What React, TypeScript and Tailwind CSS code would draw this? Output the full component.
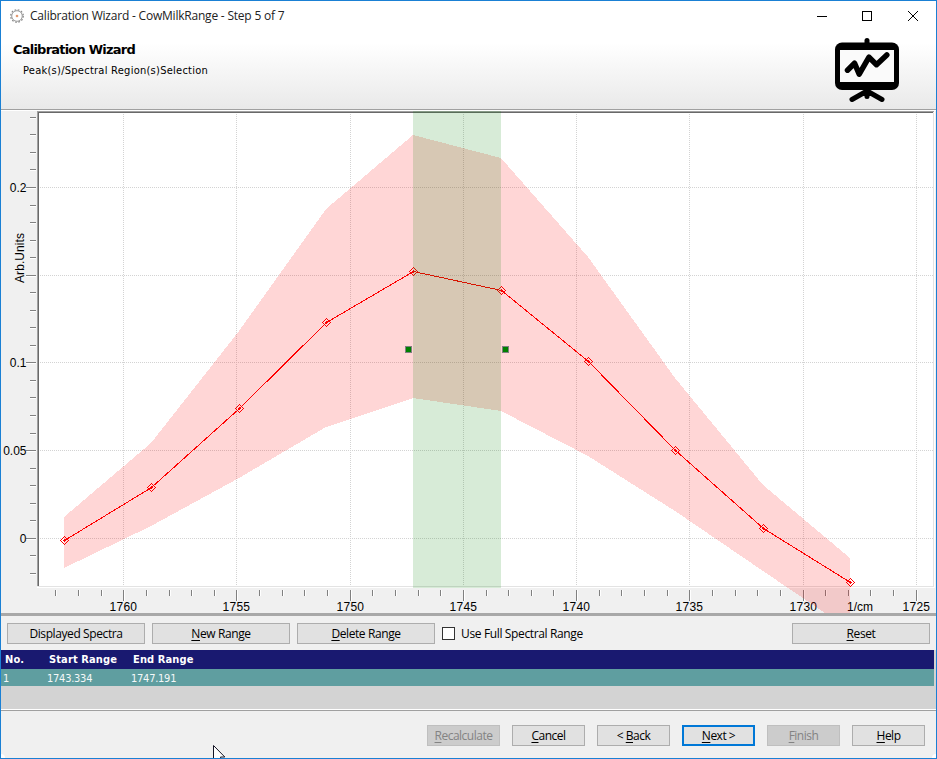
import React from "react";

const UI = "font-['Open_Sans','Noto_Sans',sans-serif]";

const line: number[][] = [[64, 540], [151, 487], [239, 408], [326, 322], [413, 271], [501, 290], [588, 361], [675, 450], [763, 528], [850, 582]];
const upper = [517, 443, 331, 209, 135, 158, 257, 378, 485, 558];
const lower = [568, 526, 478, 427, 398, 411, 456, 511, 571, 630];
const band = [
  ...line.map(([x], i) => `${x},${upper[i]}`),
  ...line.map(([x], i) => `${x},${lower[i]}`).reverse(),
].join(" ");

const xMajor = [123, 236, 350, 463, 576, 689, 803, 916].map((x, i) => ({ x, value: 1760 - i * 5 }));
const xMinor = [
  55, 78, 101, 146, 169, 191, 214, 259, 282, 304, 327, 372, 395, 418, 440, 486,
  508, 531, 553, 599, 621, 644, 667, 712, 735, 757, 780, 825, 848, 870, 893,
];
const yMajor = [
  { y: 187, label: "0.2" },
  { y: 275, label: "" },
  { y: 362, label: "0.1" },
  { y: 450, label: "0.05" },
  { y: 538, label: "0" },
];
const yMinor = Array.from({ length: 27 }, (_, i) => i)
  .filter((i) => (i + 1) % 5 !== 0)
  .map((i) => Math.floor(117.3 + i * 17.54));

function Chart() {
  return (
    <svg
      className="block font-['Liberation_Sans',Arial,sans-serif] text-[12px]"
      width="934"
      height="502"
      viewBox="1 111 934 502"
      shapeRendering="crispEdges"
    >
      <rect x="1" y="111" width="934" height="502" fill="#f0f0f0" />
      <rect x="39" y="113" width="894" height="473" fill="#fff" />
      <path d="M37 111H934V112H38V586H37Z" fill="#a0a0a0" />
      <path d="M38 112H933V113H39V586H38Z" fill="#696969" />
      <path d="M38 586H933V113H934V587H38Z" fill="#e3e3e3" />
      <path d="M37 587H934V111H935V588H37Z" fill="#fff" />
      {xMinor.map((x) => (
        <g key={x}>
          <rect x={x} y="590" width="1" height="6" fill="#808080" />
          <rect x={x + 1} y="590" width="1" height="6" fill="#fff" />
        </g>
      ))}
      {xMajor.map(({ x, value }) => (
        <g key={value}>
          <line x1={x + 0.5} x2={x + 0.5} y1="114" y2="586" stroke="#d3d3d3" strokeDasharray="1 1" />
          <rect x={x} y="590" width="1" height="11" fill="#808080" />
          <rect x={x + 1} y="590" width="1" height="11" fill="#fff" />
        </g>
      ))}
      {yMinor.map((y) => (
        <g key={y}>
          <rect x="30" y={y} width="6" height="1" fill="#808080" />
          <rect x="30" y={y + 1} width="6" height="1" fill="#fff" />
        </g>
      ))}
      {yMajor.map(({ y }) => (
        <g key={y}>
          <line x1="40" x2="933" y1={y + 0.5} y2={y + 0.5} stroke="#d3d3d3" strokeDasharray="1 1" />
          <rect x="26" y={y} width="10" height="1" fill="#808080" />
          <rect x="26" y={y + 1} width="10" height="1" fill="#fff" />
        </g>
      ))}
      <g fill="#000">
        {yMajor.map(({ y, label }) => (
          <text key={y} x="26.500" y={y + 5} textAnchor="end">{label}</text>
        ))}
        {xMajor.map(({ x, value }) => (
          <text key={value} x={x + 0.3} y="611" textAnchor="middle" textLength="27.500">{value}</text>
        ))}
        <text x="847" y="611" textLength="26">1/cm</text>
        <text x="24" y="283" transform="rotate(-90 24 283)" textLength="50">Arb.Units</text>
      </g>
      <polyline points={line.map(([x, y]) => `${x + 0.5},${y + 0.5}`).join(" ")} fill="none" stroke="#f00" />
      {line.map(([x, y]) => (
        <path
          key={x}
          d={`M${x - 3.5} ${y + 0.5}L${x + 0.5} ${y - 3.5}L${x + 4.5} ${y + 0.5}L${x + 0.5} ${y + 4.5}Z M${x - 1} ${y + 0.5}h3M${x + 0.5} ${y - 1}v3`}
          fill="none"
          stroke="#f00"
        />
      ))}
      <polygon points={band} fill="#f00" fillOpacity="0.16" />
      <rect x="413" y="111" width="88" height="477" fill="#008000" fillOpacity="0.155" />
      {[405, 502].map((x) => (
        <g key={x}>
          <rect x={x} y="346" width="7" height="7" fill="#808080" />
          <rect x={x + 1} y="347" width="5" height="5" fill="#008000" />
        </g>
      ))}
    </svg>
  );
}

function Caption({ text, hot }: { text: string; hot?: string }) {
  if (!hot) return <span>{text}</span>;
  const at = text.indexOf(hot);
  return (
    <span className="whitespace-pre">
      {text.slice(0, at)}
      <span className="underline decoration-1 underline-offset-2">{hot}</span>
      {text.slice(at + 1)}
    </span>
  );
}

function Button({ text, hot, small, disabled, primary }: {
  text: string; hot?: string; small?: boolean; disabled?: boolean; primary?: boolean;
}) {
  return (
    <button
      className={`flex h-[21px] shrink-0 items-center justify-center text-[12px] leading-none ${small ? "w-[73px] tracking-[-0.5px]" : "w-[138px] tracking-[-0.4px]"} ${
        disabled
          ? "border border-[#bfbfbf] bg-[#cccccc] text-[#838383]"
          : primary
            ? "border-2 border-[#0078d7] bg-[#e1e1e1] text-black"
            : "border border-[#adadad] bg-[#e1e1e1] text-black"
      }`}
    >
      <Caption text={text} hot={hot} />
    </button>
  );
}

function WizardIcon() {
  return (
    <svg className="mr-[36px] mt-[6px]" width="66" height="66" viewBox="834 37 66 66" fill="none" stroke="#000" strokeLinecap="round" strokeLinejoin="round">
      <path d="M867 40.500v4" strokeWidth="5" />
      <rect x="835" y="42.500" width="64" height="47.500" rx="7" fill="#000" stroke="none" />
      <rect x="840" y="50" width="54" height="32" fill="#fafafa" stroke="none" />
      <path d="M847.500 70.200l7-7 4.700 11 9.800-17 7.500 7.500 10.300-9.700" strokeWidth="5.500" />
      <path d="M867 91v5.500M867 91l-15 8.500M867 91l15 8.500" strokeWidth="5" />
    </svg>
  );
}

export default function App() {
  return (
    <div className={`relative flex h-[759px] w-[937px] flex-col overflow-hidden border border-[#1a80d4] bg-[#f0f0f0] ${UI} text-[12px] text-black`}>
      <header className="flex h-[108px] shrink-0 flex-col bg-[linear-gradient(to_bottom,#fff_0,#fff_42px,#e9e9e9_108px)]">
        <div className="flex h-[30px] shrink-0 items-center pl-2">
          <svg width="16" height="16" viewBox="0 0 16 16" fill="none">
            <circle cx="8" cy="8" r="5.300" stroke="#999" strokeWidth="1" />
            <circle cx="8" cy="8" r="6.300" stroke="#888" strokeWidth="1.200" strokeDasharray="1.650 1.650" />
            <circle cx="8" cy="8" r="1.300" fill="#e39a70" />
          </svg>
          <span className="ml-[5px] tracking-[-0.21px] text-[#222]">Calibration Wizard - CowMilkRange - Step 5 of 7</span>
          <svg className="ml-auto mr-[18px]" width="102" height="12" viewBox="816 9 102 12" fill="none" stroke="#000" shapeRendering="crispEdges">
            <path d="M817 15.500h10M862.500 10.500h9v9h-9z" />
            <path d="M908 10l10 10M918 10l-10 10" shapeRendering="auto" />
          </svg>
        </div>
        <div className="flex justify-between">
          <div className="pl-3 pt-[10px]">
            <h1 className="font-['DejaVu_Sans',sans-serif] text-[13px] font-bold leading-[17px] tracking-[-0.78px]">Calibration Wizard</h1>
            <p className="ml-[10px] mt-[5px] font-['DejaVu_Sans_Condensed','DejaVu_Sans',sans-serif] text-[11px] leading-4 tracking-[0.26px]">Peak(s)/Spectral Region(s)Selection</p>
          </div>
          <WizardIcon />
        </div>
      </header>
      <div className="h-[2px] shrink-0 border-b border-white bg-[#a0a0a0]" />
      <div className="h-[502px] shrink-0">
        <Chart />
      </div>
      <div className="h-[3px] shrink-0 bg-[#a8a8a8]" />
      <div className="flex h-[34px] shrink-0 items-start pl-[6px] pr-[6px] pt-[7px]">
        <div className="flex gap-[7px]">
          <Button text="Displayed Spectra" />
          <Button text="New Range" hot="N" />
          <Button text="Delete Range" hot="D" />
        </div>
        <label className="ml-[7px] mt-[4px] flex items-center gap-[6px] leading-[13px] tracking-[-0.36px]">
          <span className="size-[13px] border border-[#333] bg-white" />
          <span className="-mt-px">Use Full Spectral Range</span>
        </label>
        <div className="ml-auto">
          <Button text="Reset" hot="R" />
        </div>
      </div>
      <div className="flex h-[59px] shrink-0 flex-col bg-[#d3d3d3] pr-[2px] font-['DejaVu_Sans_Condensed','DejaVu_Sans',sans-serif] text-[11px]">
        <div className="grid h-[19px] grid-cols-[44px_84px_1fr] items-center bg-[#191970] pl-1 pt-px font-bold leading-4 tracking-[0.12px] text-white">
          <span>No.</span>
          <span>Start Range</span>
          <span>End Range</span>
        </div>
        <div className="grid h-[17px] grid-cols-[44px_84px_1fr] items-center bg-[#5f9ea0] pl-[2px] pt-[2px] leading-[15px] tracking-[-0.25px] text-[#f4f8f8]">
          <span>1</span>
          <span>1743.334</span>
          <span>1747.191</span>
        </div>
      </div>
      <div className="h-[2px] shrink-0 border-t border-white bg-[#a0a0a0]" />
      <footer className="flex justify-end gap-3 pr-[11px] pt-[14px]">
        <Button small text="Recalculate" hot="R" disabled />
        <Button small text="Cancel" hot="C" />
        <Button small text="< Back" hot="B" />
        <Button small text="Next >" hot="N" primary />
        <Button small text="Finish" hot="F" disabled />
        <Button small text="Help" hot="H" />
      </footer>
      <svg className="absolute left-[212px] top-[744px]" width="13" height="14" viewBox="0 0 13 14">
        <path d="M.5.500V17L4.500 13L7 18L9 17L7.500 12H11.800Z" fill="#fff" stroke="#151525" />
      </svg>
      {/* Softened window corners, where the frame line is interrupted */}
      <span className="absolute -left-px -top-px size-[5px] bg-white" />
      <span className="absolute -right-px -top-px size-[5px] bg-white" />
      <span className="absolute -bottom-px -left-px size-[5px] rounded-tr bg-white" />
      <span className="absolute -bottom-px -right-px size-[5px] rounded-tl bg-white" />
    </div>
  );
}
